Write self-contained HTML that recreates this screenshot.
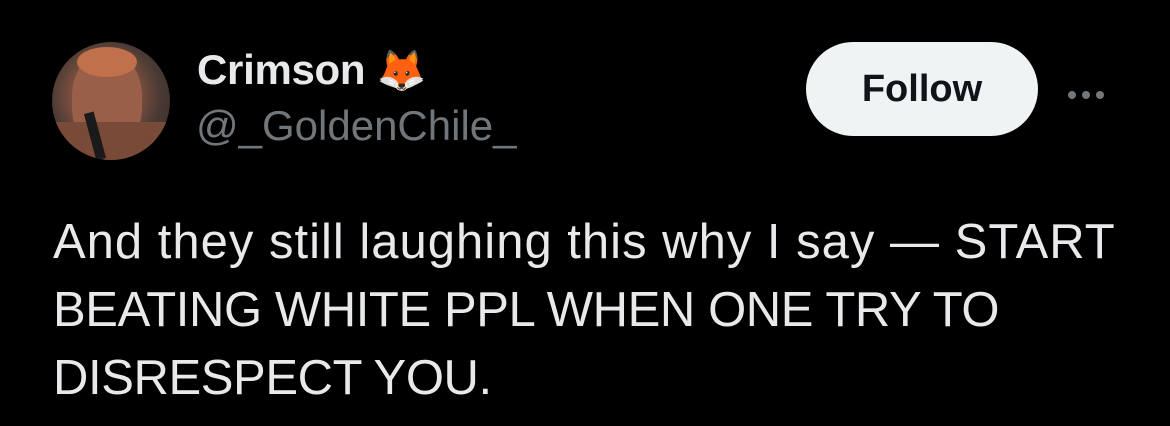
<!DOCTYPE html>
<html><head><style>
body{margin:0;background:#000;width:1170px;height:426px;overflow:hidden;font-family:"Liberation Sans",sans-serif;position:relative}
.av{position:absolute;left:52px;top:42px;width:118px;height:118px;border-radius:50%;overflow:hidden;background:radial-gradient(circle at 45% 45%,#b0735a 0%,#8a5540 30%,#4a3a35 60%,#2a2422 100%)}
.name{position:absolute;left:197px;top:46px;color:#e7e9ea;font-weight:bold;font-size:42px;letter-spacing:-0.3px}
.handle{position:absolute;left:196px;top:102px;color:#71767b;font-size:42px}
.btn{position:absolute;left:806px;top:42px;width:232px;height:94px;border-radius:47px;background:#eff3f4;color:#0f1419;font-weight:bold;font-size:38px;display:flex;align-items:center;justify-content:center}
.dots{position:absolute;left:1068px;top:86px}
.dots i{display:inline-block;width:8px;height:8px;border-radius:50%;background:#71767b;margin-right:6px}
.txt{position:absolute;left:53px;top:208px;width:1100px;color:#e7e9ea;font-size:49px;line-height:68px;letter-spacing:-0.4px}
</style></head><body>
<div class="av">
<div style="position:absolute;left:20px;top:10px;width:70px;height:100px;border-radius:45%;background:#9a5f48"></div>
<div style="position:absolute;left:25px;top:5px;width:60px;height:30px;border-radius:50%;background:#c0704a"></div>
<div style="position:absolute;left:0;top:80px;width:118px;height:40px;background:#7a4a38"></div>
<div style="position:absolute;left:38px;top:70px;width:10px;height:48px;background:#1a1a1a;transform:rotate(-15deg)"></div>
</div>
<div class="name">Crimson <span style="font-size:40px">🦊</span></div>
<div class="handle">@_GoldenChile_</div>
<div class="btn">Follow</div>
<div class="dots"><i></i><i></i><i></i></div>
<div class="txt"><span style="letter-spacing:1px">And they still laughing this why I say — START</span><br>BEATING WHITE PPL WHEN ONE TRY TO<br>DISRESPECT YOU.</div>
</body></html>
